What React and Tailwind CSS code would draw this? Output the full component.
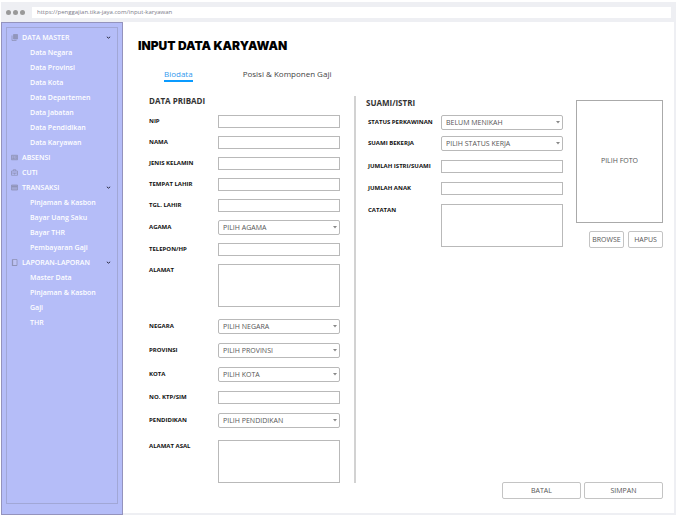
import { Fragment } from 'react';

const MENU = [
  {
    title: 'DATA MASTER',
    icon: 'copy',
    items: ['Data Negara', 'Data Provinsi', 'Data Kota', 'Data Departemen', 'Data Jabatan', 'Data Pendidikan', 'Data Karyawan'],
  },
  { title: 'ABSENSI', icon: 'card', items: [] },
  { title: 'CUTI', icon: 'case', items: [] },
  { title: 'TRANSAKSI', icon: 'credit', items: ['Pinjaman & Kasbon', 'Bayar Uang Saku', 'Bayar THR', 'Pembayaran Gaji'] },
  { title: 'LAPORAN-LAPORAN', icon: 'book', items: ['Master Data', 'Pinjaman & Kasbon', 'Gaji', 'THR'] },
];

function MenuIcon({ name }) {
  return (
    <svg viewBox="0 0 14 14" className="h-[7px] w-[7px] shrink-0" fill="none" stroke="#8f93b8" strokeWidth="1.6" aria-hidden="true">
      {name === 'copy' && (
        <>
          <path d="M5 1h8v9H5z" fill="#9196bd" />
          <path d="M2 3v10h9M7 3v5" />
        </>
      )}
      {name === 'card' && (
        <>
          <path d="M1 2.5h12v9H1z" fill="#a3a8d4" />
          <path d="M3 9h4M4 6h2M9 5.5h3M9 8.5h3" />
        </>
      )}
      {name === 'case' && <path d="M1 4h12v8.5H1zM4.5 4V1.5h5V4M1 8h12M6 8v2h2V8" />}
      {name === 'credit' && (
        <>
          <path d="M1 2h12v10H1z" fill="#a3a8d4" />
          <path d="M1 5h12" strokeWidth="3" />
        </>
      )}
      {name === 'book' && (
        <>
          <path d="M3 1h9v12H3z" fill="#bdc2f4" />
          <path d="M3 1v12h9" strokeWidth="2.5" />
        </>
      )}
    </svg>
  );
}

function Sidebar() {
  return (
    <aside className="flex w-[122px] shrink-0 flex-col border border-[#9493bd] bg-[#b5bdf8] px-1 pt-1 pb-[10px]">
      <nav className="flex-1 border border-[#a1a7d6] pt-[2px] pl-1 text-[7px] leading-[15px] font-semibold text-white">
        <ul>
          {MENU.map((group) => (
            <Fragment key={group.title}>
              <li>
                <button type="button" className="flex h-[15px] w-full items-center gap-1 pr-[6px] text-left">
                  <MenuIcon name={group.icon} />
                  <span className="flex-1">{group.title}</span>
                  {group.items.length > 0 && (
                    <svg viewBox="0 0 6 6" className="h-[5px] w-[5px]" fill="none" stroke="#2b2c44" strokeWidth="1.2" aria-hidden="true">
                      <path d="M1 2.2l2 1.6 2-1.6" />
                    </svg>
                  )}
                </button>
              </li>
              {group.items.map((item) => (
                <li key={item} className="pl-[19px]">
                  <a href="#" className="block">{item}</a>
                </li>
              ))}
            </Fragment>
          ))}
        </ul>
      </nav>
    </aside>
  );
}

const BOX = 'min-w-0 flex-1 border border-[#b9b9b9] bg-white px-1 text-[7px] text-[#555]';

function Row({ id, label, wide, top, children }) {
  return (
    <div className={top ? 'flex items-start' : 'flex items-center'}>
      <label
        htmlFor={id}
        className={`${wide ? 'w-[73px]' : 'w-[69px]'} shrink-0 text-[6px] leading-[13px] font-bold whitespace-nowrap text-[#111]`}
      >
        {label}
      </label>
      {children}
    </div>
  );
}

function TextRow({ id, label, wide }) {
  return (
    <Row id={id} label={label} wide={wide}>
      <input id={id} type="text" className={`${BOX} h-[13px]`} />
    </Row>
  );
}

function SelectRow({ id, label, wide, value }) {
  return (
    <Row id={id} label={label} wide={wide}>
      <div className="relative flex min-w-0 flex-1">
        <select id={id} className={`${BOX} h-[15px] appearance-none rounded-[2px] leading-[13px]`}>
          <option>{value}</option>
        </select>
        <svg viewBox="0 0 4 3" className="pointer-events-none absolute top-[6px] right-[3px] h-[3px] w-[4px]" aria-hidden="true">
          <path d="M0 0h4L2 2.5z" fill="#888" />
        </svg>
      </div>
    </Row>
  );
}

function AreaRow({ id, label, wide }) {
  return (
    <Row id={id} label={label} wide={wide} top>
      <textarea id={id} className={`${BOX} block h-[43px] resize-none`} />
    </Row>
  );
}

const BUTTON = 'rounded-[2px] border border-[#c4c4c4] bg-white text-center text-[7px] leading-[15px] text-[#555]';

export default function App() {
  return (
    <div className="flex min-h-screen flex-col bg-white pt-[2px] pr-[2px] pb-px pl-px font-['Open_Sans',sans-serif]">
      <header className="flex h-5 items-center bg-[#eeeff3] pr-[5px] pl-[5px]">
        <div className="flex w-[22px] gap-[2px]">
          <span className="h-[5px] w-[5px] rounded-full bg-[#999]" />
          <span className="h-[5px] w-[5px] rounded-full bg-[#999]" />
          <span className="h-[5px] w-[5px] rounded-full bg-[#999]" />
        </div>
        <input
          aria-label="URL"
          defaultValue="https://penggajian.tika-jaya.com/input-karyawan"
          className="ml-1 h-[11px] min-w-0 flex-1 bg-white px-[5px] text-[6px] text-[#7c7c8a]"
        />
      </header>

      <div className="flex flex-1">
        <Sidebar />
        <main className="flex min-w-0 flex-1 flex-col border-r-2 border-b-2 border-[#eeeff3] pt-4 pr-[11px] pb-[14px] pl-[15px]">
          <h1 className="font-['Inter',sans-serif] text-[12px] leading-4 font-black text-black">INPUT DATA KARYAWAN</h1>

          <div role="tablist" className="mt-[14px] flex items-start gap-[50px] pl-[26px] text-[8px] leading-3 text-[#444]">
            <button type="button" role="tab" aria-selected="true" className="border-b-2 border-[#0a9bff] text-[#3399ee]">
              Biodata
            </button>
            <button type="button" role="tab" aria-selected="false">
              Posisi &amp; Komponen Gaji
            </button>
          </div>

          <form className="mt-[14px] grid flex-1 grid-cols-[minmax(0,205fr)_2px_minmax(0,307fr)] pl-[11px]">
            <section className="pr-[14px]">
              <h2 className="mb-[9px] text-[8px] leading-[10px] font-bold text-[#333]">DATA PRIBADI</h2>
              <div className="flex flex-col gap-3">
                <div className="flex flex-col gap-2">
                  <TextRow id="nip" label="NIP" />
                  <TextRow id="nama" label="NAMA" />
                  <TextRow id="kelamin" label="JENIS KELAMIN" />
                  <TextRow id="tempat" label="TEMPAT LAHIR" />
                  <TextRow id="tanggal" label="TGL. LAHIR" />
                  <SelectRow id="agama" label="AGAMA" value="PILIH AGAMA" />
                  <TextRow id="telepon" label="TELEPON/HP" />
                  <AreaRow id="alamat" label="ALAMAT" />
                </div>
                <div className="flex flex-col gap-[9px]">
                  <SelectRow id="negara" label="NEGARA" value="PILIH NEGARA" />
                  <SelectRow id="provinsi" label="PROVINSI" value="PILIH PROVINSI" />
                  <SelectRow id="kota" label="KOTA" value="PILIH KOTA" />
                  <TextRow id="ktp" label="NO. KTP/SIM" />
                  <SelectRow id="pendidikan" label="PENDIDIKAN" value="PILIH PENDIDIKAN" />
                </div>
                <AreaRow id="asal" label="ALAMAT ASAL" />
              </div>
            </section>

            <div className="mb-4 bg-[#d2d2d2]" />

            <div className="flex flex-col pl-[10px]">
              <div className="flex gap-[13px]">
                <section className="min-w-0 flex-1">
                  <h2 className="mb-[7px] pt-[2px] text-[8px] leading-[10px] font-bold text-[#333]">SUAMI/ISTRI</h2>
                  <div className="flex flex-col gap-[9px] pl-[2px]">
                    <div className="flex flex-col gap-[6px]">
                      <SelectRow id="status" label="STATUS PERKAWINAN" value="BELUM MENIKAH" wide />
                      <SelectRow id="bekerja" label="SUAMI BEKERJA" value="PILIH STATUS KERJA" wide />
                    </div>
                    <TextRow id="pasangan" label="JUMLAH ISTRI/SUAMI" wide />
                    <TextRow id="anak" label="JUMLAH ANAK" wide />
                    <AreaRow id="catatan" label="CATATAN" wide />
                  </div>
                </section>
                <div className="flex w-[87px] flex-col items-end gap-2 pt-1">
                  <div className="flex h-[123px] w-full items-center justify-center border border-[#aaa] text-[7px] text-[#555]">
                    PILIH FOTO
                  </div>
                  <div className="flex gap-1">
                    <button type="button" className={`${BUTTON} w-[35px]`}>BROWSE</button>
                    <button type="button" className={`${BUTTON} w-[35px]`}>HAPUS</button>
                  </div>
                </div>
              </div>
              <div className="mt-auto flex justify-end gap-[3px]">
                <button type="button" className={`${BUTTON} w-[79px]`}>BATAL</button>
                <button type="submit" className={`${BUTTON} w-[79px]`}>SIMPAN</button>
              </div>
            </div>
          </form>
        </main>
      </div>
    </div>
  );
}
